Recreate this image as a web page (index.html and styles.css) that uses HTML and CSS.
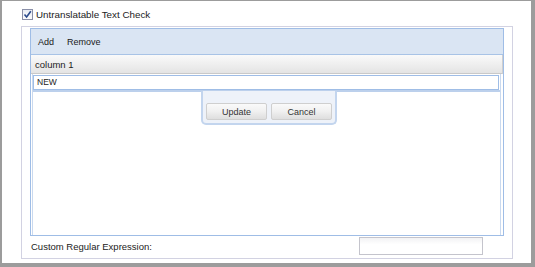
FILE: index.html
```html
<!DOCTYPE html>
<html>
<head>
<meta charset="utf-8">
<link rel="stylesheet" href="styles.css">
</head>
<body>
<div class="frame">
  <label class="check-row">
    <span class="checkbox"><svg width="9" height="9" viewBox="0 0 9 9"><path d="M1.5 4.5 L3.6 7 L7.8 1.2" fill="none" stroke="#2a4a8c" stroke-width="1.6"/></svg></span>
    <span class="check-label">Untranslatable Text Check</span>
  </label>
  <div class="fieldset">
    <div class="grid">
      <div class="toolbar">
        <span class="tb-btn">Add</span>
        <span class="tb-btn">Remove</span>
      </div>
      <div class="header"><span class="hd-cell">column 1</span></div>
      <div class="body">
        <div class="editor-row">
          <div class="editor-input">NEW</div>
        </div>
        <div class="editor-btns">
          <button class="btn">Update</button>
          <button class="btn">Cancel</button>
        </div>
      </div>
    </div>
    <div class="regex-row">
      <span class="regex-label">Custom Regular Expression:</span>
      <span class="regex-input"></span>
    </div>
  </div>
</div>
</body>
</html>
```
FILE: styles.css
```css
* { box-sizing: border-box; }
html, body { margin: 0; padding: 0; background: #fff; }
body { font-family: "Liberation Sans", Tahoma, sans-serif; font-size: 10px; color: #222; }

.frame {
  width: 535px;
  height: 267px;
  border-style: solid;
  border-color: #9c9c9c;
  border-width: 1px 4px 4px 2px;
  padding: 6px 0 0 19px;
  display: flex;
  flex-direction: column;
}

.check-row {
  display: flex;
  align-items: center;
  gap: 3px;
  height: 14px;
  margin-left: 1px;
}
.checkbox {
  width: 11px; height: 11px;
  border: 1px solid #8a8fa8;
  background: linear-gradient(#e8ecf4, #fbfbfd);
  display: flex; align-items: center; justify-content: center;
}
.check-label { color: #222; font-size: 9.8px; }

.fieldset {
  margin-top: 5px;
  width: 492px;
  height: 233px;
  border: 1px solid #d2d2e2;
  padding: 1px 8px 0 8px;
  display: flex;
  flex-direction: column;
}

.grid {
  height: 208px;
  border: 1px solid #9fbde6;
  display: flex;
  flex-direction: column;
  width: 474px;
}
.toolbar {
  height: 26px;
  background: #dae5f3;
  border-bottom: 1px solid #a8c3e6;
  display: flex;
  align-items: center;
  padding-left: 7px;
  gap: 13px;
}
.tb-btn { color: #1a1a1a; font-size: 9px; }
.header {
  height: 19px;
  margin-right: 1px;
  background: linear-gradient(#fafafa, #e4e4e4);
  border-bottom: 1px solid #c9c9c9;
  display: flex; align-items: center;
  padding-left: 4px;
  box-shadow: 1px 0 0 #cfcfcf;
}
.hd-cell { font-size: 9.5px; color: #222; }
.body {
  flex: 1;
  position: relative;
  border-left: 1px solid #c9d9ef;
  margin-left: 1px;
  margin-right: 2px;
  border-right: 1px solid #c9d9ef;
}
.editor-row {
  height: 18px;
  border-bottom: 2px solid #bcd0ec;
  padding: 1px 1px 0 0;
}
.editor-input {
  height: 15px;
  border: 1px solid #9fbde6;
  background: #fff;
  font-size: 8.5px;
  padding-left: 3px;
  line-height: 13px;
  color: #222;
}
.editor-btns {
  position: absolute;
  left: 168px;
  top: 17px;
  width: 136px;
  height: 34px;
  background: #eef2f9;
  border: 2px solid #c3d5ee;
  border-top: none;
  border-radius: 0 0 5px 5px;
  display: flex;
  gap: 4px;
  padding: 12px 0 0 3px;
}
.btn {
  width: 61px; height: 17px;
  border: 1px solid #cfcfcf;
  border-radius: 2px;
  background: linear-gradient(#fafafa 0%, #f0f0f0 50%, #dedede 100%);
  font-family: "Liberation Sans", Tahoma, sans-serif;
  font-size: 9px;
  color: #333;
  padding: 0;
}

.regex-row {
  display: flex;
  align-items: center;
  justify-content: space-between;
  padding: 0 21px 0 1px;
  height: 20px;
}
.regex-label { font-size: 9.5px; color: #222; }
.regex-input {
  width: 124px; height: 18px;
  border: 1px solid #c4c4cc;
  background: linear-gradient(#f2f2f4, #fff 40%);
}
```
